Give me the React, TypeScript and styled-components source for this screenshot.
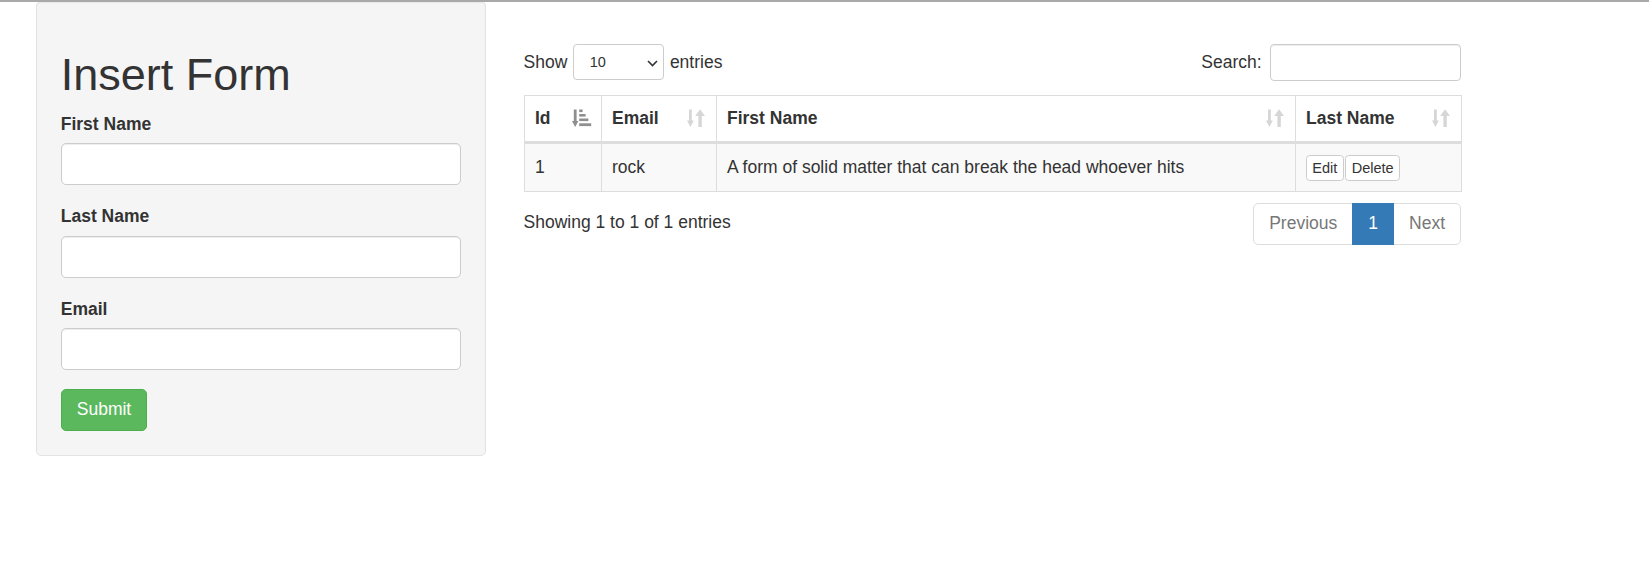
import React from "react";
import styled, { createGlobalStyle } from "styled-components";

const GlobalStyle = createGlobalStyle`
  html, body { margin: 0; padding: 0; background: #fff; }
  body {
    border-top: 2px solid #a9a9a9;
    font-family: "Liberation Sans", Arial, Helvetica, sans-serif;
    font-size: 17.5px;
    line-height: 25px;
    color: #333;
  }
  * { box-sizing: border-box; }
`;

const Page = styled.div`
  display: flex;
  align-items: flex-start;
  padding-left: 36px;
  gap: 37.5px;
`;

const Well = styled.div`
  width: 450px;
  flex: none;
  margin-top: -1px;
  background: #f5f5f5;
  border: 1px solid #e3e3e3;
  border-radius: 5px;
  padding: 24.75px 23.75px 23.75px;
  box-shadow: inset 0 1px 1px rgba(0, 0, 0, 0.05);
`;

const Title = styled.h1`
  font-size: 45px;
  font-weight: 500;
  line-height: 49.5px;
  margin: 23.25px 0 12.5px;
  color: #333;
`;

const FormGroup = styled.div`
  margin-bottom: 19px;
`;

const Label = styled.label`
  display: block;
  font-weight: bold;
  line-height: 25px;
  margin-bottom: 6.25px;
`;

const TextInput = styled.input`
  display: block;
  width: 100%;
  height: 42px;
  padding: 7.5px 15px;
  font: inherit;
  color: #555;
  background: #fff;
  border: 1px solid #ccc;
  border-radius: 5px;
  box-shadow: inset 0 1px 1px rgba(0, 0, 0, 0.075);
  outline: none;
`;

const SubmitButton = styled.button`
  display: inline-block;
  height: 42px;
  padding: 0 15px;
  font: inherit;
  color: #fff;
  background: #5cb85c;
  border: 1px solid #4cae4c;
  border-radius: 5px;
  cursor: pointer;
`;

const Main = styled.div`
  width: 937.5px;
  flex: none;
  margin-top: 42.3px;
`;

const TopBar = styled.div`
  display: flex;
  justify-content: space-between;
  align-items: center;
  height: 36px;
  margin-bottom: 15px;
`;

const InlineField = styled.label<{ $gap: number }>`
  display: flex;
  align-items: center;
  gap: ${(p) => p.$gap}px;
  font-weight: normal;
`;

const SelectWrap = styled.span`
  position: relative;
  display: inline-block;
`;

const Select = styled.select`
  appearance: none;
  -webkit-appearance: none;
  width: 91.6px;
  height: 36px;
  padding: 0 0 0 16px;
  font-family: "Liberation Sans", Arial, sans-serif;
  font-size: 14.5px;
  color: #333;
  background: #fff;
  border: 1px solid #ccc;
  border-radius: 4px;
  outline: none;
`;

const Chevron = styled.svg`
  position: absolute;
  right: 6px;
  top: 15.5px;
  pointer-events: none;
`;

const SearchInput = styled.input`
  width: 191.4px;
  height: 36.4px;
  padding: 0 12px;
  font: inherit;
  background: #fff;
  border: 1px solid #ccc;
  border-radius: 4px;
  box-shadow: inset 0 1px 1px rgba(0, 0, 0, 0.075);
  outline: none;
`;

const Table = styled.table`
  width: 937.5px;
  table-layout: fixed;
  border-collapse: collapse;
  border: 1px solid #ddd;
`;

const Th = styled.th`
  padding: 10px 9px 10px 10.5px;
  line-height: 25px;
  text-align: left;
  font-weight: bold;
  vertical-align: middle;
  border: 1px solid #ddd;
  border-bottom: 3px solid #ddd;
  background: #fff;
`;

const HeadInner = styled.div`
  display: flex;
  justify-content: space-between;
  align-items: center;
`;

const Row = styled.tr`
  background: #f9f9f9;
`;

const Td = styled.td`
  padding: 10px 10.5px;
  line-height: 27px;
  vertical-align: middle;
  border: 1px solid #ddd;
`;

const Actions = styled.div`
  display: flex;
  align-items: center;
  gap: 1px;
  height: 27px;
  margin-left: -0.5px;
`;

const SmallButton = styled.button`
  height: 26.4px;
  padding: 0 5.75px;
  font-family: "Liberation Sans", Arial, sans-serif;
  font-size: 14.5px;
  line-height: 20px;
  color: #333;
  background: #fff;
  border: 1px solid #ccc;
  border-radius: 3.75px;
  cursor: pointer;
`;

const BottomBar = styled.div`
  display: flex;
  justify-content: space-between;
  align-items: flex-start;
  margin-top: 10.6px;
`;

const Info = styled.div`
  padding-top: 7px;
`;

const Pagination = styled.div`
  display: flex;
`;

const PageLink = styled.span<{ $active?: boolean; $first?: boolean; $last?: boolean }>`
  position: relative;
  display: block;
  padding: 7.5px 15px;
  line-height: 25px;
  margin-left: ${(p) => (p.$first ? "0" : "-1px")};
  color: ${(p) => (p.$active ? "#fff" : "#777")};
  background: ${(p) => (p.$active ? "#337ab7" : "#fff")};
  border: 1px solid ${(p) => (p.$active ? "#337ab7" : "#ddd")};
  border-radius: ${(p) => (p.$first ? "5px 0 0 5px" : p.$last ? "0 5px 5px 0" : "0")};
  z-index: ${(p) => (p.$active ? 2 : 1)};
`;

const SortIcon = ({ kind }: { kind: "asc" | "both" }) =>
  kind === "asc" ? (
    <svg width="20" height="19" viewBox="0 0 20 19" style={{ flex: "none" }}>
      <g fill="#8f8f8f">
        <rect x="1.8" y="0.5" width="2.8" height="12.5" />
        <polygon points="0,12 6.4,12 3.2,18" />
        <rect x="7.2" y="0.5" width="3.4" height="2.6" />
        <rect x="7.2" y="5" width="6.4" height="2.6" />
        <rect x="7.2" y="9.5" width="9.2" height="2.6" />
        <rect x="7.2" y="14.3" width="12" height="2.8" />
      </g>
    </svg>
  ) : (
    <svg width="20" height="19" viewBox="0 0 20 19" style={{ flex: "none" }}>
      <g fill="#d6d6d6">
        <rect x="2" y="0.5" width="2.8" height="12" />
        <polygon points="0,11.5 6.8,11.5 3.4,18" />
        <rect x="11.4" y="6" width="3.4" height="12" />
        <polygon points="8.2,7 18,7 13.1,0.3" />
      </g>
    </svg>
  );

const HeadCell = ({ label, kind }: { label: string; kind: "asc" | "both" }) => (
  <Th>
    <HeadInner>
      <span>{label}</span>
      <SortIcon kind={kind} />
    </HeadInner>
  </Th>
);

export default function App() {
  return (
    <>
      <GlobalStyle />
      <Page>
        <Well>
          <Title>Insert Form</Title>
          <form onSubmit={(e) => e.preventDefault()}>
            <FormGroup>
              <Label htmlFor="first">First Name</Label>
              <TextInput id="first" type="text" />
            </FormGroup>
            <FormGroup>
              <Label htmlFor="last">Last Name</Label>
              <TextInput id="last" type="text" />
            </FormGroup>
            <FormGroup>
              <Label htmlFor="email">Email</Label>
              <TextInput id="email" type="text" />
            </FormGroup>
            <SubmitButton type="submit">Submit</SubmitButton>
          </form>
        </Well>

        <Main>
          <TopBar>
            <InlineField $gap={5.5}>
              Show
              <SelectWrap>
                <Select defaultValue="10">
                  <option value="10">10</option>
                  <option value="25">25</option>
                  <option value="50">50</option>
                  <option value="100">100</option>
                </Select>
                <Chevron width="11" height="7" viewBox="0 0 11 7">
                  <path d="M1 1 L5.5 5.5 L10 1" fill="none" stroke="#333" strokeWidth="1.6" />
                </Chevron>
              </SelectWrap>
              entries
            </InlineField>
            <InlineField $gap={8}>
              Search:
              <SearchInput type="search" />
            </InlineField>
          </TopBar>

          <Table>
            <colgroup>
              <col style={{ width: 77 }} />
              <col style={{ width: 115 }} />
              <col style={{ width: 579 }} />
              <col style={{ width: 166.5 }} />
            </colgroup>
            <thead>
              <tr>
                <HeadCell label="Id" kind="asc" />
                <HeadCell label="Email" kind="both" />
                <HeadCell label="First Name" kind="both" />
                <HeadCell label="Last Name" kind="both" />
              </tr>
            </thead>
            <tbody>
              <Row>
                <Td>1</Td>
                <Td>rock</Td>
                <Td>A form of solid matter that can break the head whoever hits</Td>
                <Td>
                  <Actions>
                    <SmallButton>Edit</SmallButton>
                    <SmallButton>Delete</SmallButton>
                  </Actions>
                </Td>
              </Row>
            </tbody>
          </Table>

          <BottomBar>
            <Info>Showing 1 to 1 of 1 entries</Info>
            <Pagination>
              <PageLink $first>Previous</PageLink>
              <PageLink $active>1</PageLink>
              <PageLink $last>Next</PageLink>
            </Pagination>
          </BottomBar>
        </Main>
      </Page>
    </>
  );
}
